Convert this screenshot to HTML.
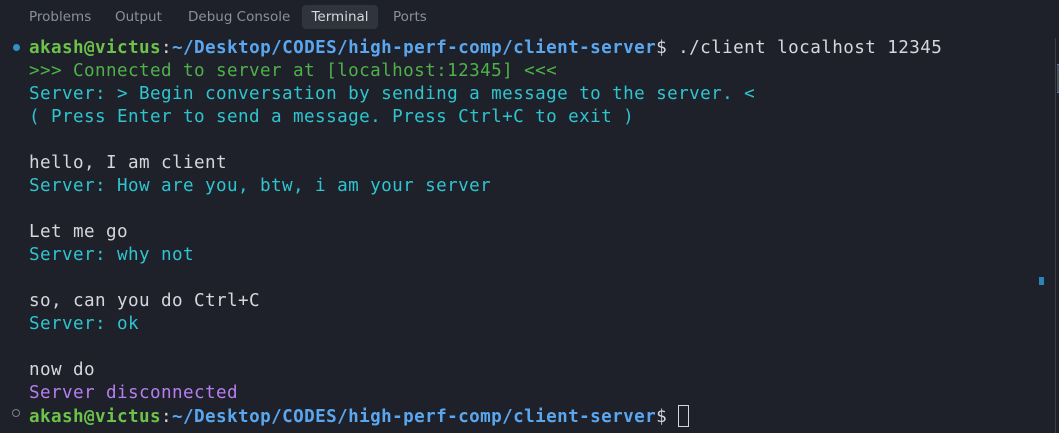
<!DOCTYPE html>
<html><head><meta charset="utf-8"><style>
html,body{margin:0;padding:0;width:1059px;height:433px;overflow:hidden;background:#1e2129;}
.tabs{position:absolute;top:0;left:0;width:1059px;height:34px;font-family:"DejaVu Sans","Liberation Sans",sans-serif;font-size:13.5px;color:#8a909a;}
.tab{position:absolute;top:5px;height:24px;line-height:24px;}
.term{position:absolute;left:0;top:37px;font-family:"DejaVu Sans Mono","Liberation Mono",monospace;font-size:17.6px;letter-spacing:0.41px;line-height:23px;white-space:pre;color:#d4d7dc;}
.l{position:absolute;left:29px;height:23px;}
.g{color:#6cc24a;font-weight:bold}.b{color:#5aa7f0;font-weight:bold}.gr{color:#4fb14a}.c{color:#2ec5d0}.p{color:#b67ef0}
</style></head><body>
<div class="tabs">
<span class="tab" style="left:29px">Problems</span>
<span class="tab" style="left:115px">Output</span>
<span class="tab" style="left:188px">Debug Console</span>
<span class="tab" style="left:302px;width:76px;background:#30343c;border-radius:4px;color:#d6d9de;text-align:center">Terminal</span>
<span class="tab" style="left:393px">Ports</span>
</div>
<div style="position:absolute;left:13px;top:44px;width:7px;height:7px;border-radius:50%;background:#2f8fc9"></div>
<div style="position:absolute;left:12px;top:409px;width:6px;height:6px;border-radius:50%;border:1px solid #7a8088"></div>
<div class="term">
<div class="l" style="top:0"><span class="g">akash@victus</span>:<span class="b">~/Desktop/CODES/high-perf-comp/client-server</span>$ ./client localhost 12345</div>
<div class="l gr" style="top:23px">&gt;&gt;&gt; Connected to server at [localhost:12345] &lt;&lt;&lt;</div>
<div class="l c" style="top:46px">Server: &gt; Begin conversation by sending a message to the server. &lt;</div>
<div class="l c" style="top:69px">( Press Enter to send a message. Press Ctrl+C to exit )</div>
<div class="l" style="top:115px">hello, I am client</div>
<div class="l c" style="top:138px">Server: How are you, btw, i am your server</div>
<div class="l" style="top:184px">Let me go</div>
<div class="l c" style="top:207px">Server: why not</div>
<div class="l" style="top:253px">so, can you do Ctrl+C</div>
<div class="l c" style="top:276px">Server: ok</div>
<div class="l" style="top:322px">now do</div>
<div class="l p" style="top:345px">Server disconnected</div>
<div class="l" style="top:368px"><span class="g">akash@victus</span>:<span class="b">~/Desktop/CODES/high-perf-comp/client-server</span>$ <span style="display:inline-block;width:11px;height:22px;border:1px solid #d4d7dc;vertical-align:-5px;box-sizing:border-box"></span></div>
</div>
<div style="position:absolute;left:1055px;top:38px;width:1px;height:395px;background:#3a3f47"></div>
<div style="position:absolute;left:1057px;top:64px;width:2px;height:27px;background:#4a4f58;border-top:1px solid #3b82d6;border-bottom:1px solid #3b82d6"></div>
<div style="position:absolute;left:1039px;top:277px;width:5px;height:8px;background:#2a86b8"></div>
</body></html>
